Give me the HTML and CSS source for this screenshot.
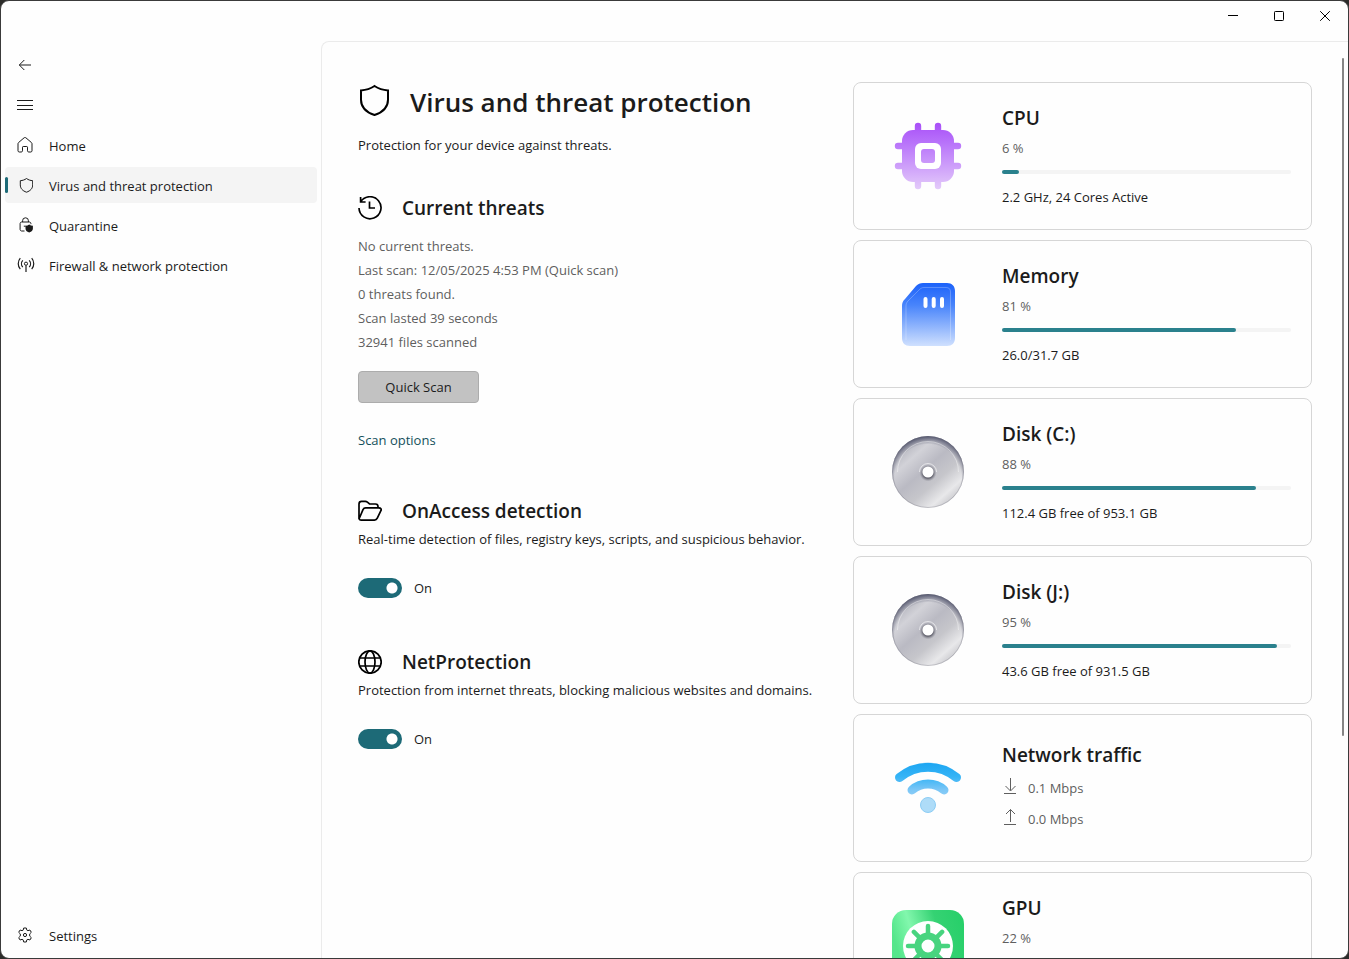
FILE: index.html
```html
<!DOCTYPE html>
<html lang="en">
<head>
  <meta charset="UTF-8" />
  <meta name="viewport" content="width=device-width, initial-scale=1.0" />
  <title>Virus and threat protection</title>
  <link rel="stylesheet" href="styles.css">
</head>
<body>
  <div class="window">
    <header class="titlebar">
      <button aria-label="Minimize"><svg width="10" height="10" viewBox="0 0 10 10"><path d="M0 4.5h10" /></svg></button>
      <button aria-label="Maximize"><svg width="10" height="10" viewBox="0 0 10 10"><rect x=".5" y=".5" width="9" height="9" rx=".8" /></svg></button>
      <button aria-label="Close"><svg width="10" height="10" viewBox="0 0 10 10"><path d="M.2.2l9.6 9.6M9.8.2L.2 9.8" /></svg></button>
    </header>

    <div class="layout">
      <nav class="sidebar">
        <button class="nav-item" aria-label="Back">
          <svg width="16" height="16" viewBox="0 0 16 16"><path d="M14 8H2.5M7.3 3L2.3 8l5 5" /></svg>
        </button>
        <button class="nav-item" aria-label="Menu">
          <svg width="16" height="16" viewBox="0 0 16 16"><path d="M0 3.5h16M0 8.5h16M0 12.5h16" /></svg>
        </button>
        <a class="nav-item" href="#home">
          <svg width="16" height="16" viewBox="0 0 16 16"><path d="M1 6.700c0-.5.2-.9.6-1.200L7 .9c.6-.5 1.400-.5 2 0l5.400 4.600c.4.3.6.7.6 1.200v7.100c0 .7-.5 1.200-1.200 1.200h-2.100c-.7 0-1.200-.5-1.200-1.200v-3.600c0-.4-.3-.7-.7-.7H6.200c-.4 0-.7.3-.7.7v3.600c0 .7-.5 1.200-1.200 1.200H2.200c-.7 0-1.200-.5-1.200-1.200z" /></svg>
          <span>Home</span>
        </a>
        <a class="nav-item active" href="#virus" aria-current="page">
          <svg width="16" height="16" viewBox="0 0 16 16"><path d="M9.500 1.500c1.900 1.400 3.900 2 6.200 2.200v4.200c0 3.400-2.100 5.900-6.200 7.300-4.100-1.400-6.200-3.900-6.200-7.300V3.700c2.300-.2 4.300-.8 6.200-2.200z" /></svg>
          <span>Virus and threat protection</span>
        </a>
        <a class="nav-item" href="#quarantine">
          <svg width="16" height="16" viewBox="0 0 16 16"><path d="M7.500 14H4.600c-.8 0-1.500-.7-1.500-1.500v-6C3.100 5.700 3.800 5 4.600 5h7.800c.8 0 1.500.7 1.500 1.500v.7M5.600 5V3.700a2.900 2.900 0 0 1 5.800 0V5M6.800 9.200h1.900" /><path class="solid" d="M12.200 7.500c1.100.8 2.300 1.200 3.700 1.300v2.600c0 1.900-1.200 3.200-3.700 4.100-2.500-.9-3.700-2.200-3.700-4.100V8.800c1.400-.1 2.600-.5 3.700-1.300z" /></svg>
          <span>Quarantine</span>
        </a>
        <a class="nav-item" href="#firewall">
          <svg width="18" height="16" viewBox="0 0 18 16"><path d="M3.300 1.200a8.400 8.400 0 0 0 0 11M5.800 3.300a5 5 0 0 0 0 6.800M12.200 3.300a5 5 0 0 1 0 6.800M14.700 1.200a8.400 8.400 0 0 1 0 11M9 8.500V15" stroke-width="1.200" /><circle cx="9" cy="6.700" r="1.600" /></svg>
          <span>Firewall &amp; network protection</span>
        </a>
        <a class="nav-item settings" href="#settings">
          <svg width="16" height="16" viewBox="0 0 16 16"><path d="M6.700 1h2.600l.5 2.100 1.100.6 2-.7 1.400 2.300-1.600 1.600v2.200l1.600 1.600-1.400 2.300-2-.7-1.100.6-.5 2.100H6.700l-.5-2.100-1.100-.6-2 .7-1.400-2.300 1.600-1.600V6.900L1.700 5.300 3.100 3l2 .7 1.100-.6z" stroke-linejoin="round" /><circle cx="8" cy="8" r="1.600" /></svg>
          <span>Settings</span>
        </a>
      </nav>

      <main class="content">
        <div class="protection">
          <section class="intro">
            <h1>
              <svg width="32" height="36" viewBox="0 0 32 36"><path d="M16.500 2c4 2.700 8.400 4.100 13.500 4.400v9.300c0 7.100-4.300 12.200-13.500 15.300C7.300 27.900 3 22.800 3 15.700V6.400C8.100 6.100 12.500 4.700 16.500 2z" /></svg>
              Virus and threat protection
            </h1>
            <p>Protection for your device against threats.</p>
          </section>

          <section class="threats">
            <h2>
              <svg width="24" height="24" viewBox="0 0 24 24"><path d="M2.600 6A11 11 0 1 1 1 12M2.600 1v5h5M11.500 5.500V12H17" /></svg>
              Current threats
            </h2>
            <ul>
              <li>No current threats.</li>
              <li>Last scan: 12/05/2025 4:53 PM (Quick scan)</li>
              <li>0 threats found.</li>
              <li>Scan lasted 39 seconds</li>
              <li>32941 files scanned</li>
            </ul>
            <button class="scan">Quick Scan</button>
            <a class="options" href="#options">Scan options</a>
          </section>

          <section class="feature">
            <h2>
              <svg width="24" height="24" viewBox="0 0 24 24"><path d="M1 20V5c0-1.700.9-2.600 2.600-2.600h3.700c.8 0 1.500.3 2.100.8l2.100 1.800h6c1.500 0 2.500.9 2.500 2.500v1.300M1 20L5 10.700c.5-1.200 1.400-1.900 2.700-1.900h13.200c1.900 0 2.800 1.300 2 2.900l-3.600 7.500c-.6 1.300-1.500 1.900-2.800 1.900H3.300C1.900 21.100 1 20.600 1 19" /></svg>
              OnAccess detection
            </h2>
            <p>Real-time detection of files, registry keys, scripts, and suspicious behavior.</p>
            <label class="toggle"><input type="checkbox" role="switch" checked>On</label>
          </section>

          <section class="feature">
            <h2>
              <svg width="24" height="24" viewBox="0 0 24 24"><circle cx="12" cy="12" r="11.200" /><ellipse cx="12" cy="12" rx="5" ry="11.200" /><path d="M2 8h20M2 16h20" /></svg>
              NetProtection
            </h2>
            <p>Protection from internet threats, blocking malicious websites and domains.</p>
            <label class="toggle"><input type="checkbox" role="switch" checked>On</label>
          </section>
        </div>

        <div class="cards">
          <article class="card">
            <svg width="72" height="72" viewBox="0 0 72 72">
              <defs>
                <linearGradient id="cpu" gradientUnits="userSpaceOnUse" x1="0" y1="3" x2="0" y2="69">
                  <stop offset="0" stop-color="#a94ff8" /><stop offset=".3" stop-color="#b873fa" /><stop offset="1" stop-color="#e3cafa" />
                </linearGradient>
              </defs>
              <path d="M26 6v60M46 6v60M6 26h60M6 46h60" stroke="url(#cpu)" stroke-width="6.400" stroke-linecap="round" />
              <rect x="10" y="10" width="52" height="52" rx="11" fill="url(#cpu)" />
              <rect x="23" y="23" width="26" height="26" rx="6" fill="#fff" />
              <rect x="29" y="29" width="14" height="14" rx="3" fill="url(#cpu)" />
            </svg>
            <div class="stats">
              <h3>CPU</h3>
              <p class="percent">6 %</p>
              <progress value="6" max="100" aria-label="CPU usage"></progress>
              <p>2.2 GHz, 24 Cores Active</p>
            </div>
          </article>

          <article class="card">
            <svg width="72" height="72" viewBox="0 0 72 72">
              <defs>
                <linearGradient id="memory" x1="0" y1="0" x2="0" y2="1">
                  <stop offset="0" stop-color="#1c62fa" /><stop offset=".35" stop-color="#4884fb" /><stop offset="1" stop-color="#cfe0fe" />
                </linearGradient>
              </defs>
              <path d="M31 5h24c5 0 8 3 8 8v47c0 5-3 8-8 8H18c-5 0-8-3-8-8V28c0-3 .8-5 3-7L24 8c2-2 4-3 7-3z" fill="url(#memory)" />
              <path d="M14 62V28c0-2 .6-3.500 2-5L27 12c1.500-1.500 3-2.500 5-2.500h22c3 0 4.500 1.500 4.500 4.500v48" fill="none" stroke="#fff" stroke-opacity=".25" />
              <path d="M33.500 21v7M41.700 21v7M50 21v7" stroke="#fff" stroke-width="4" stroke-linecap="round" />
            </svg>
            <div class="stats">
              <h3>Memory</h3>
              <p class="percent">81 %</p>
              <progress value="81" max="100" aria-label="Memory usage"></progress>
              <p>26.0/31.7 GB</p>
            </div>
          </article>

          <article class="card">
            <svg width="72" height="72" viewBox="0 0 72 72">
              <defs>
                <linearGradient id="disc" x1=".1" y1=".1" x2=".85" y2=".95">
                  <stop offset="0" stop-color="#a9aab4" /><stop offset=".24" stop-color="#d2d2d8" /><stop offset=".45" stop-color="#babac3" /><stop offset=".65" stop-color="#c6c6cb" /><stop offset=".84" stop-color="#e8e8ea" /><stop offset="1" stop-color="#c0c0c5" />
                </linearGradient>
                <radialGradient id="disc-edge" cx=".5" cy=".58" r=".58">
                  <stop offset=".8" stop-color="#3e415c" stop-opacity="0" /><stop offset="1" stop-color="#3e415c" stop-opacity=".85" />
                </radialGradient>
                <radialGradient id="disc-hole" cx=".5" cy=".5" r=".5">
                  <stop offset=".6" stop-color="#5c5c68" /><stop offset="1" stop-color="#8e8e98" stop-opacity="0" />
                </radialGradient>
              </defs>
              <circle cx="36" cy="36" r="36" fill="url(#disc)" />
              <circle cx="36" cy="36" r="36" fill="url(#disc-edge)" />
              <circle cx="36" cy="36" r="35.500" fill="none" stroke="#666875" stroke-opacity=".3" />
              <path d="M5.500 36a30.500 30.500 0 0 1 61 0" fill="none" stroke="#fff" stroke-opacity=".4" />
              <path d="M27.500 36a8.500 8.500 0 0 1 17 0" fill="none" stroke="#fff" stroke-opacity=".6" />
              <circle cx="36" cy="37" r="8.500" fill="url(#disc-hole)" />
              <circle cx="36" cy="36" r="5.600" fill="#fff" />
            </svg>
            <div class="stats">
              <h3>Disk (C:)</h3>
              <p class="percent">88 %</p>
              <progress value="88" max="100" aria-label="Disk C usage"></progress>
              <p>112.4 GB free of 953.1 GB</p>
            </div>
          </article>

          <article class="card">
            <svg width="72" height="72" viewBox="0 0 72 72">
              <circle cx="36" cy="36" r="36" fill="url(#disc)" />
              <circle cx="36" cy="36" r="36" fill="url(#disc-edge)" />
              <circle cx="36" cy="36" r="35.500" fill="none" stroke="#666875" stroke-opacity=".3" />
              <path d="M5.500 36a30.500 30.500 0 0 1 61 0" fill="none" stroke="#fff" stroke-opacity=".4" />
              <path d="M27.500 36a8.500 8.500 0 0 1 17 0" fill="none" stroke="#fff" stroke-opacity=".6" />
              <circle cx="36" cy="37" r="8.500" fill="url(#disc-hole)" />
              <circle cx="36" cy="36" r="5.600" fill="#fff" />
            </svg>
            <div class="stats">
              <h3>Disk (J:)</h3>
              <p class="percent">95 %</p>
              <progress value="95" max="100" aria-label="Disk J usage"></progress>
              <p>43.6 GB free of 931.5 GB</p>
            </div>
          </article>

          <article class="card network">
            <svg width="72" height="72" viewBox="0 0 72 72">
              <defs>
                <linearGradient id="wifi" gradientUnits="userSpaceOnUse" x1="0" y1="10" x2="0" y2="60">
                  <stop offset="0" stop-color="#1ba5f2" /><stop offset=".3" stop-color="#36b4f6" /><stop offset=".55" stop-color="#7ac6f6" /><stop offset="1" stop-color="#b9e0fa" />
                </linearGradient>
              </defs>
              <path d="M7.500 25.500C24 11.700 48 11.700 64.500 25.500M20 38c9-8 23-8 32 0" fill="none" stroke="url(#wifi)" stroke-width="9" stroke-linecap="round" />
              <circle cx="36" cy="53" r="7.500" fill="#aedcf8" stroke="#8ccdf5" />
            </svg>
            <div class="stats">
              <h3>Network traffic</h3>
              <p class="traffic">
                <svg width="16" height="16" viewBox="0 0 16 16"><path d="M8.500 0v12.500M3.500 8l5 5 5-5M2 15.500h12" /></svg>
                0.1 Mbps
              </p>
              <p class="traffic">
                <svg width="16" height="16" viewBox="0 0 16 16"><path d="M8.500 13V.5M4 5L8.500.5 13 5M2 15.500h12" /></svg>
                0.0 Mbps
              </p>
            </div>
          </article>

          <article class="card">
            <svg width="72" height="72" viewBox="0 0 72 72">
              <defs>
                <linearGradient id="gpu" x1="0" y1=".3" x2="1" y2="0">
                  <stop offset="0" stop-color="#55e68b" /><stop offset=".25" stop-color="#82f7ad" /><stop offset=".6" stop-color="#35d273" /><stop offset="1" stop-color="#25cf68" />
                </linearGradient>
              </defs>
              <rect width="72" height="72" rx="14" fill="url(#gpu)" />
              <circle cx="36" cy="36" r="25" fill="#fff" />
              <path d="M36 16v40M16 36h40M21.900 21.900l28.200 28.200M50.100 21.900L21.900 50.100" stroke="#48d47f" stroke-width="4.500" stroke-linecap="round" />
              <circle cx="36" cy="36" r="10" fill="#fff" stroke="#48d47f" stroke-width="7" />
            </svg>
            <div class="stats">
              <h3>GPU</h3>
              <p class="percent">22 %</p>
            </div>
          </article>
        </div>
        <div class="scroll-thumb"></div>
      </main>
    </div>
  </div>
</body>
</html>
```

FILE: styles.css
```css
* {
  box-sizing: border-box;
}
body {
  margin: 0;
  background-color: #2c2c2a;
  color: #1b1b1b;
  font-family: "Open Sans", "Noto Sans", sans-serif;
  font-size: 13px;
  line-height: 24px;
}
h1, h2, h3, p, ul {
  margin: 0;
  padding: 0;
  list-style: none;
}
button {
  border: none;
  background: none;
  color: inherit;
  font: inherit;
}
a {
  color: inherit;
  text-decoration: none;
}

.window {
  display: flex;
  flex-direction: column;
  height: 100vh;
  border: 1px solid #3a3a3a;
  border-radius: 9px;
  background-color: #fefefe;
  overflow: hidden;
}
.titlebar {
  display: flex;
  flex: none;
  justify-content: flex-end;
  height: 40px;
}
.titlebar button {
  display: flex;
  align-items: center;
  justify-content: center;
  width: 46px;
  height: 30px;
  padding: 0;
}
.titlebar svg {
  fill: none;
  stroke: #000;
}
.layout {
  display: grid;
  grid-template-columns: 320px minmax(0, 1fr);
  flex: 1;
  min-height: 0;
}

/* Sidebar */
.sidebar {
  display: flex;
  flex-direction: column;
  gap: 4px;
  padding: 6px 4px 5px;
}
.nav-item {
  position: relative;
  display: flex;
  align-items: center;
  gap: 16px;
  height: 36px;
  padding: 0 12px;
  border-radius: 4px;
}
.nav-item svg {
  flex: none;
  width: 18px;
  height: 16px;
  margin-right: -2px;
  fill: none;
  stroke: #1b1b1b;
}
.nav-item svg[width="16"] {
  width: 16px;
  margin-right: 0;
}
.nav-item span {
  padding-top: 2px;
}
.nav-item .solid {
  fill: #1b1b1b;
  stroke: none;
}
.active {
  background-color: #f4f4f4;
}
.active::before {
  content: "";
  position: absolute;
  left: 0;
  width: 3px;
  height: 16px;
  border-radius: 2px;
  background-color: #1d6a77;
}
.settings {
  margin-top: auto;
}

/* Main content */
.content {
  position: relative;
  display: grid;
  grid-template-columns: repeat(2, minmax(0, 1fr));
  align-items: start;
  gap: 36px;
  padding: 40px 36px;
  border: solid #ebebeb;
  border-width: 1px 0 0 1px;
  border-top-left-radius: 8px;
  overflow: hidden;
}
h1, h2 {
  display: flex;
  align-items: center;
}
h1 svg, h2 svg {
  flex: none;
  fill: none;
  stroke: #000;
  stroke-width: 2;
}
h1 {
  gap: 20px;
  font-size: 26px;
  font-weight: 600;
  line-height: 36px;
}
h2, h3 {
  font-size: 19px;
  font-weight: 600;
  line-height: 28px;
}
h2 {
  gap: 20px;
}
h2 svg {
  stroke-width: 1.7;
}
.protection {
  white-space: nowrap;
}
.intro {
  padding-top: 2px;
}
.intro p {
  margin-top: 13px;
}
.threats {
  display: flex;
  flex-direction: column;
  align-items: flex-start;
  margin-top: 37px;
}
.threats ul {
  margin-top: 12px;
  color: #5f5f5f;
}
.scan {
  width: 121px;
  height: 32px;
  margin-top: 17px;
  padding: 0;
  border: 1px solid #acacac;
  border-radius: 4px;
  background-color: #c2c2c2;
}
.options {
  margin-top: 25px;
  color: #14505b;
}
.feature {
  margin-top: 45px;
}
.feature + .feature {
  margin-top: 48px;
}
.feature p {
  margin-top: 2px;
}
.toggle {
  display: flex;
  align-items: center;
  gap: 12px;
  width: max-content;
  margin-top: 25px;
}
.toggle input {
  appearance: none;
  width: 44px;
  height: 20px;
  margin: 0;
  border-radius: 10px;
  background: radial-gradient(circle at 34px 10px, #fff 5px, #1d6a77 6px);
}

/* Status cards */
.cards {
  display: flex;
  flex-direction: column;
  gap: 10px;
}
.card {
  display: grid;
  grid-template-columns: 148px minmax(0, 1fr);
  align-items: center;
  min-height: 148px;
  padding-right: 20px;
  border: 1px solid #d6d6d6;
  border-radius: 8px;
}
.card > svg {
  justify-self: center;
}
.stats {
  align-self: start;
  padding-top: 21px;
}
.network .stats {
  padding-top: 26px;
}
.percent {
  margin-top: 4px;
  color: #5f5f5f;
}
progress {
  appearance: none;
  display: block;
  width: 100%;
  height: 4px;
  margin: 10px 0 11px;
  border: none;
}
progress::-webkit-progress-bar {
  border-radius: 2px;
  background-color: #f4f4f4;
}
progress::-webkit-progress-value {
  border-radius: 2px;
  background-color: #2a818d;
}
.traffic {
  display: flex;
  align-items: center;
  gap: 10px;
  padding-top: 7px;
  color: #5f5f5f;
}
.traffic svg {
  margin-bottom: 4px;
  fill: none;
  stroke: #5f5f5f;
}
.scroll-thumb {
  position: absolute;
  top: 16px;
  right: 4px;
  width: 2px;
  height: 74%;
  border-radius: 1px;
  background-color: #858585;
}
```
